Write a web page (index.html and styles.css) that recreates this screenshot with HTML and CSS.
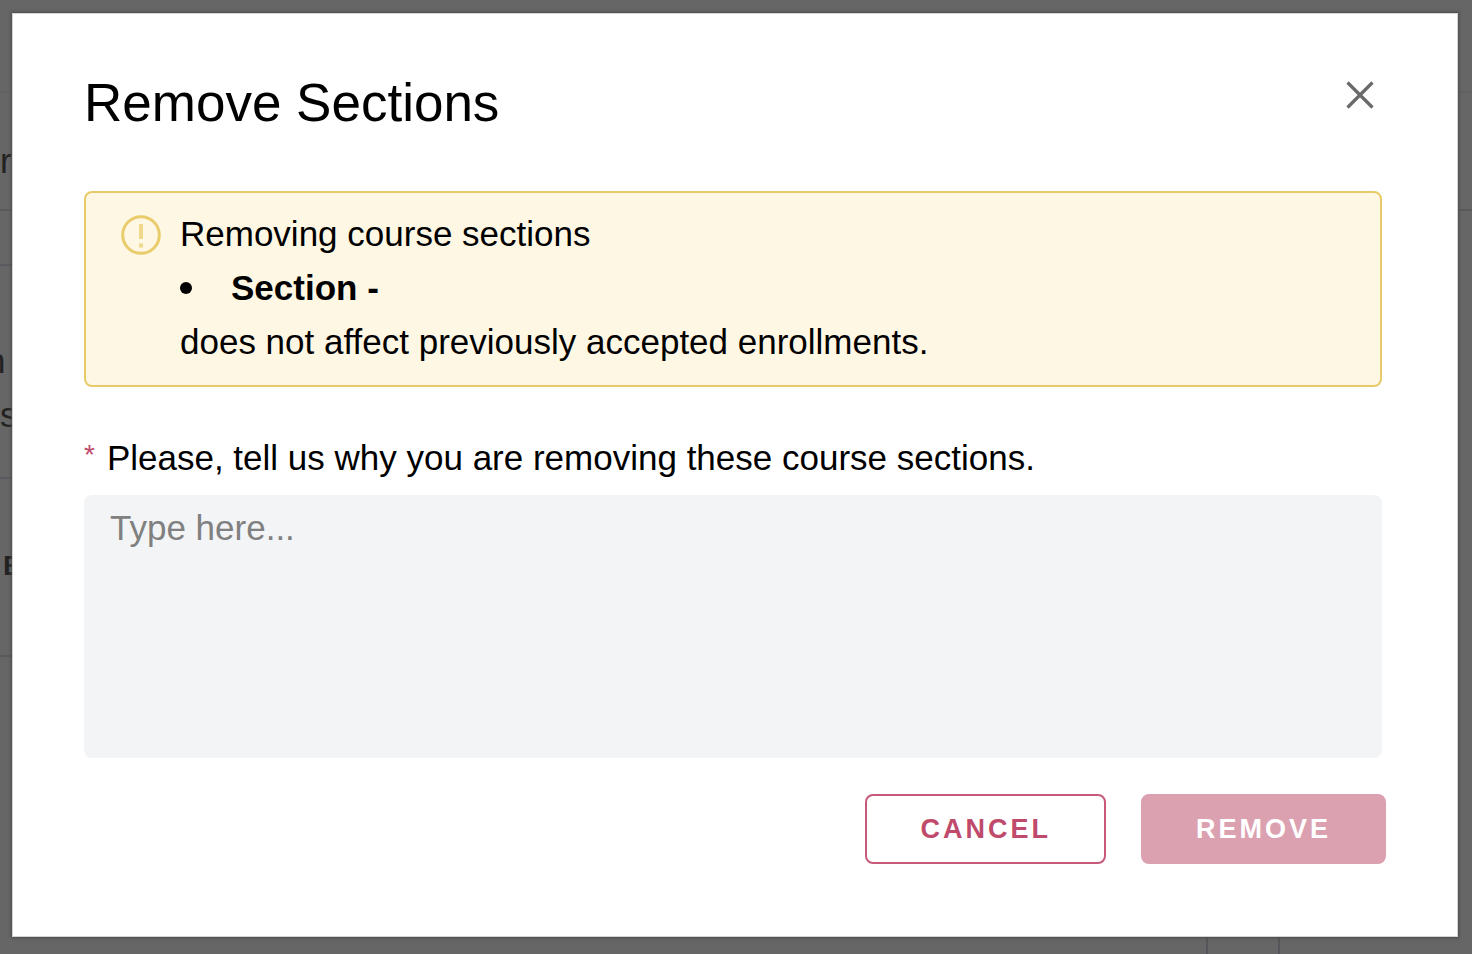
FILE: index.html
```html
<!DOCTYPE html>
<html lang="en">
<head>
<meta charset="utf-8">
<meta name="viewport" content="width=device-width, initial-scale=1">
<title>Remove Sections</title>
<link rel="stylesheet" href="styles.css">
</head>
<body>
<div class="page" aria-hidden="true">
  <div class="page-bar"></div>
  <div class="page-heading">r</div>
  <div class="page-body">
    <div class="page-side">
      <div class="side-gap"></div>
      <div class="side-text"><span class="side-tail">n</span><span>s</span></div>
      <div class="side-label">E</div>
    </div>
    <div class="page-column"></div>
  </div>
</div>
<div class="overlay">
  <form class="dialog" role="dialog" aria-modal="true" aria-labelledby="dialog-title">
    <header class="dialog-header">
      <h1 class="dialog-title" id="dialog-title">Remove Sections</h1>
      <button class="close" type="button" aria-label="Close">
        <svg class="close-icon" viewBox="0 0 28 28"><path d="M1.500 1.500L26.500 26.500M26.500 1.500L1.500 26.500"/></svg>
      </button>
    </header>
    <div class="content">
      <div class="alert">
        <svg class="alert-icon" viewBox="0 0 40 40"><circle cx="20" cy="20" r="18.300"/><path class="alert-mark" d="M20 9v15M20 28.500v4"/></svg>
        <div class="alert-text">
          <p>Removing course sections</p>
          <ul class="sections"><li>Section -</li></ul>
          <p>does not affect previously accepted enrollments.</p>
        </div>
      </div>
      <label class="label" for="reason"><span class="required">*</span>Please, tell us why you are removing these course sections.</label>
      <textarea class="reason" id="reason" placeholder="Type here..."></textarea>
    </div>
    <footer class="actions">
      <button class="button button-outline" type="button">CANCEL</button>
      <button class="button button-filled" type="submit" disabled>REMOVE</button>
    </footer>
  </form>
</div>
</body>
</html>
```
FILE: styles.css
```css
* {
  box-sizing: border-box;
}

body,
h1,
p,
ul {
  margin: 0;
  padding: 0;
}

body {
  min-height: 100vh;
  display: grid;
  overflow: hidden;
  background: #666;
  color: #000;
  font-family: "Liberation Sans", Arial, sans-serif;
  font-size: 35px;
  line-height: 54px;
}

.page,
.overlay {
  grid-area: 1 / 1;
  min-width: 0;
}

.page {
  display: flex;
  flex-direction: column;
  background: #666;
  color: #222;
}

.page-bar {
  height: 93px;
  border-bottom: 2px solid #626262;
}

.page-heading {
  height: 118px;
  padding-top: 41px;
  border-bottom: 2px solid #5a5a5c;
}

.page-body {
  flex: 1;
  display: flex;
  justify-content: space-between;
}

.page-side {
  width: 50%;
}

.side-gap {
  height: 55px;
  border-bottom: 2px solid #5a5a60;
}

.side-text {
  display: flex;
  flex-direction: column;
  height: 213px;
  padding-top: 68px;
  border-bottom: 2px solid #5a5a60;
}

.side-tail {
  margin-left: -14px;
}

.side-label {
  height: 178px;
  padding: 60px 0 0 3px;
  border-bottom: 2px solid #5a5a60;
  font-size: 28px;
  font-weight: bold;
}

.page-column {
  width: 74px;
  margin-right: 192px;
  border: solid #56565a;
  border-width: 0 2px;
}

.overlay {
  position: relative;
  display: flex;
  padding: 13px 14px 17px 12px;
}

.dialog {
  flex: 1;
  min-width: 0;
  padding: 60px 72px;
  background: #fff;
  box-shadow: inset 0 0 0 1px #d4d4d4, 0 0 3px 1px #4c4c4c;
}

.dialog-header {
  display: flex;
  align-items: flex-start;
  justify-content: space-between;
  margin-bottom: 58px;
}

.dialog-title {
  font-size: 53px;
  font-weight: normal;
  line-height: 60px;
}

.close {
  display: flex;
  margin: 8px 12px 0 0;
  padding: 0;
  border: 0;
  background: none;
  cursor: pointer;
}

.close-icon {
  width: 28px;
  height: 28px;
  fill: none;
  stroke: #6a6a6a;
  stroke-width: 3.2;
}

.content {
  display: flex;
  flex-direction: column;
  margin-right: 4px;
}

.alert {
  display: flex;
  gap: 19px;
  padding: 14px 35px 16px;
  border: 2px solid #e8cb69;
  border-radius: 8px;
  background: #fef7e4;
}

.alert-icon {
  flex: none;
  width: 40px;
  height: 40px;
  margin-top: 8px;
  fill: none;
  stroke: #e9cc6c;
  stroke-width: 3;
}

.alert-mark {
  stroke: #efd88b;
  stroke-width: 4;
}

.sections {
  list-style: none;
}

.sections li {
  display: flex;
  align-items: center;
  gap: 39px;
  font-weight: bold;
}

.sections li::before {
  content: "";
  width: 12px;
  height: 12px;
  border-radius: 50%;
  background: #000;
}

.label {
  display: flex;
  gap: 12px;
  margin: 44px 0 10px;
}

.required {
  color: #bf4a6b;
  font-size: 28px;
  line-height: 48px;
}

.reason {
  height: 263px;
  padding: 6px 26px;
  border: 0;
  border-radius: 8px;
  background: #f3f4f6;
  color: #000;
  font: inherit;
  resize: none;
}

.reason::placeholder {
  color: #808080;
}

.actions {
  display: flex;
  justify-content: flex-end;
  gap: 35px;
  margin-top: 36px;
}

.button {
  height: 70px;
  padding: 0 53px;
  border: 2px solid #c75a7a;
  border-radius: 8px;
  font: bold 27px "Liberation Sans", Arial, sans-serif;
  letter-spacing: 3px;
}

.button-outline {
  background: #fff;
  color: #bf4a6b;
}

.button-filled {
  border-color: #dca1b1;
  background: #dca1b1;
  color: #fff;
}
```
